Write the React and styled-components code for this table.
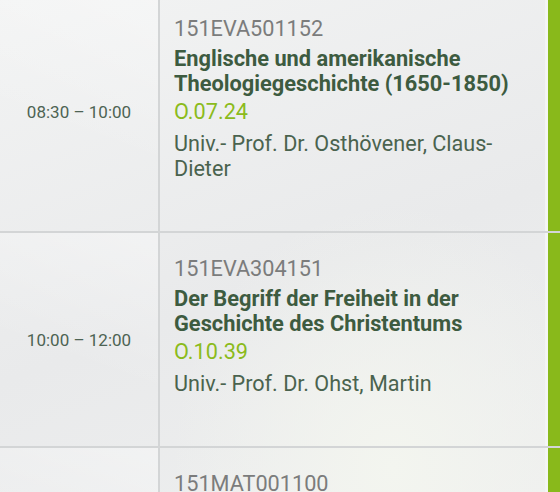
import React from "react"
import styled, {createGlobalStyle} from "styled-components"

const GlobalStyle = createGlobalStyle`
  html, body {
    margin: 0;
    padding: 0;
    width: 560px;
    height: 492px;
    overflow: hidden;
    background: #eceded;
    font-family: Roboto, "Noto Sans", sans-serif;
  }
`

const Page = styled.div`
  width: 560px;
  height: 492px;
  overflow: hidden;
  background: radial-gradient(ellipse at 70% 95%, #f3f5ef 0%, rgba(243,245,239,0) 40%),
    linear-gradient(160deg, #f2f3f3 0%, #e9eaeb 55%, #eeefef 100%);
`

const List = styled.div`
  margin-top: -7px;
  display: flex;
  flex-direction: column;
`

const Row = styled.div`
  display: flex;
  height: ${p => p.height}px;
  border-bottom: 2px solid #d3d5d6;
  box-sizing: content-box;
`

const TimeCell = styled.div`
  width: 158px;
  flex-shrink: 0;
  display: flex;
  align-items: center;
  justify-content: center;
  font-size: 17px;
  color: #4d6353;
  border-right: 2px solid #d3d5d6;
  background: linear-gradient(200deg, rgba(255,255,255,0.35) 0%, rgba(255,255,255,0) 60%);
`

const Content = styled.div`
  flex: 1;
  padding: 23px 6px 0 14px;
  display: flex;
  flex-direction: column;
  white-space: nowrap;
`

const Code = styled.div`
  font-size: 21.7px;
  line-height: 26px;
  color: #7b7c7c;
`

const Title = styled.div`
  font-size: 21.8px;
  font-weight: bold;
  line-height: 25px;
  color: #3d5b40;
  margin-top: 3.5px;
`

const Room = styled.div`
  font-size: 21.7px;
  line-height: 30px;
  color: #8bbb1c;
  margin-top: 1.5px;
`

const Lecturer = styled.div`
  font-size: 21.6px;
  line-height: 25px;
  color: #4a634e;
  margin-top: 3.5px;
`

const Accent = styled.div`
  width: 12px;
  flex-shrink: 0;
  background: #89b91b;
  border-left: 3px solid #f4f5f4;
`

const courses = [
  {
    time: "08:30 – 10:00",
    code: "151EVA501152",
    title: ["Englische und amerikanische", "Theologiegeschichte (1650-1850)"],
    room: "O.07.24",
    lecturer: ["Univ.- Prof. Dr. Osthövener, Claus-", "Dieter"],
    height: 238
  },
  {
    time: "10:00 – 12:00",
    code: "151EVA304151",
    title: ["Der Begriff der Freiheit in der", "Geschichte des Christentums"],
    room: "O.10.39",
    lecturer: ["Univ.- Prof. Dr. Ohst, Martin"],
    height: 213
  },
  {
    time: "12:00 – 14:00",
    code: "151MAT001100",
    title: ["Analysis I"],
    room: "F.13.11",
    lecturer: ["Prof. Dr. Lehmann"],
    height: 213
  }
]

const CourseRow = ({course}) => (
  <Row height={course.height}>
    <TimeCell>{course.time}</TimeCell>
    <Content>
      <Code>{course.code}</Code>
      <Title>{course.title.map(t => <div key={t}>{t}</div>)}</Title>
      <Room>{course.room}</Room>
      <Lecturer>{course.lecturer.map(l => <div key={l}>{l}</div>)}</Lecturer>
    </Content>
    <Accent/>
  </Row>
)

const App = () => {
  return (
    <>
      <GlobalStyle/>
      <Page>
        <List>
          {courses.map(c => <CourseRow key={c.code} course={c}/>)}
        </List>
      </Page>
    </>
  )
}

export default App
